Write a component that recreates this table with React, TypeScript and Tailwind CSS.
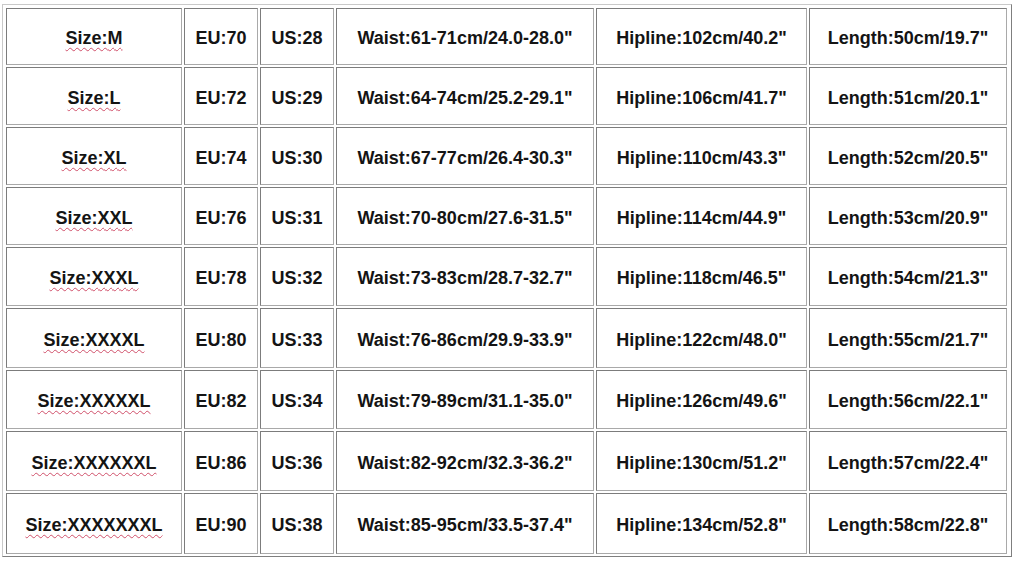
import React from "react";

const rows: [string, string, string, string, string, string][] = [
  ["M", "70", "28", "61-71cm/24.0-28.0\"", "102cm/40.2\"", "50cm/19.7\""],
  ["L", "72", "29", "64-74cm/25.2-29.1\"", "106cm/41.7\"", "51cm/20.1\""],
  ["XL", "74", "30", "67-77cm/26.4-30.3\"", "110cm/43.3\"", "52cm/20.5\""],
  ["XXL", "76", "31", "70-80cm/27.6-31.5\"", "114cm/44.9\"", "53cm/20.9\""],
  ["XXXL", "78", "32", "73-83cm/28.7-32.7\"", "118cm/46.5\"", "54cm/21.3\""],
  ["XXXXL", "80", "33", "76-86cm/29.9-33.9\"", "122cm/48.0\"", "55cm/21.7\""],
  ["XXXXXL", "82", "34", "79-89cm/31.1-35.0\"", "126cm/49.6\"", "56cm/22.1\""],
  ["XXXXXXL", "86", "36", "82-92cm/32.3-36.2\"", "130cm/51.2\"", "57cm/22.4\""],
  ["XXXXXXXL", "90", "38", "85-95cm/33.5-37.4\"", "134cm/52.8\"", "58cm/22.8\""],
];

function Cell({ children }: { children: React.ReactNode }) {
  return (
    <div className="flex items-center justify-center border border-t-[#7c7c7c] border-l-[#7c7c7c] border-b-[#a9a9a9] border-r-[#a9a9a9] bg-white pt-[3px] text-[18px] font-bold leading-none text-[#141414] whitespace-nowrap">
      {children}
    </div>
  );
}

export default function App() {
  return (
    <div className="w-[1018px] h-[561px] bg-white overflow-hidden" style={{ fontFamily: '"Liberation Sans", Arial, sans-serif' }}>
      <div className="ml-[2px] mt-[4px] inline-block border border-t-[#c9c9c9] border-l-[#c9c9c9] border-b-[#7f7f7f] border-r-[#7f7f7f] pl-[3px] pt-[3px] pr-[4px] pb-[2px]">
        <div className="grid grid-cols-[176px_74px_74px_258px_211px_198px] grid-rows-[57px_58px_58px_58px_59px_60px_59px_60px_61px] gap-[2px]">
          {rows.map((r, i) => (
            <React.Fragment key={i}>
              <Cell>
                <span className="underline decoration-wavy decoration-[#d0506a] decoration-1 underline-offset-[3px]">
                  Size:{r[0]}
                </span>
              </Cell>
              <Cell>EU:{r[1]}</Cell>
              <Cell>US:{r[2]}</Cell>
              <Cell>Waist:{r[3]}</Cell>
              <Cell>Hipline:{r[4]}</Cell>
              <Cell>Length:{r[5]}</Cell>
            </React.Fragment>
          ))}
        </div>
      </div>
    </div>
  );
}
